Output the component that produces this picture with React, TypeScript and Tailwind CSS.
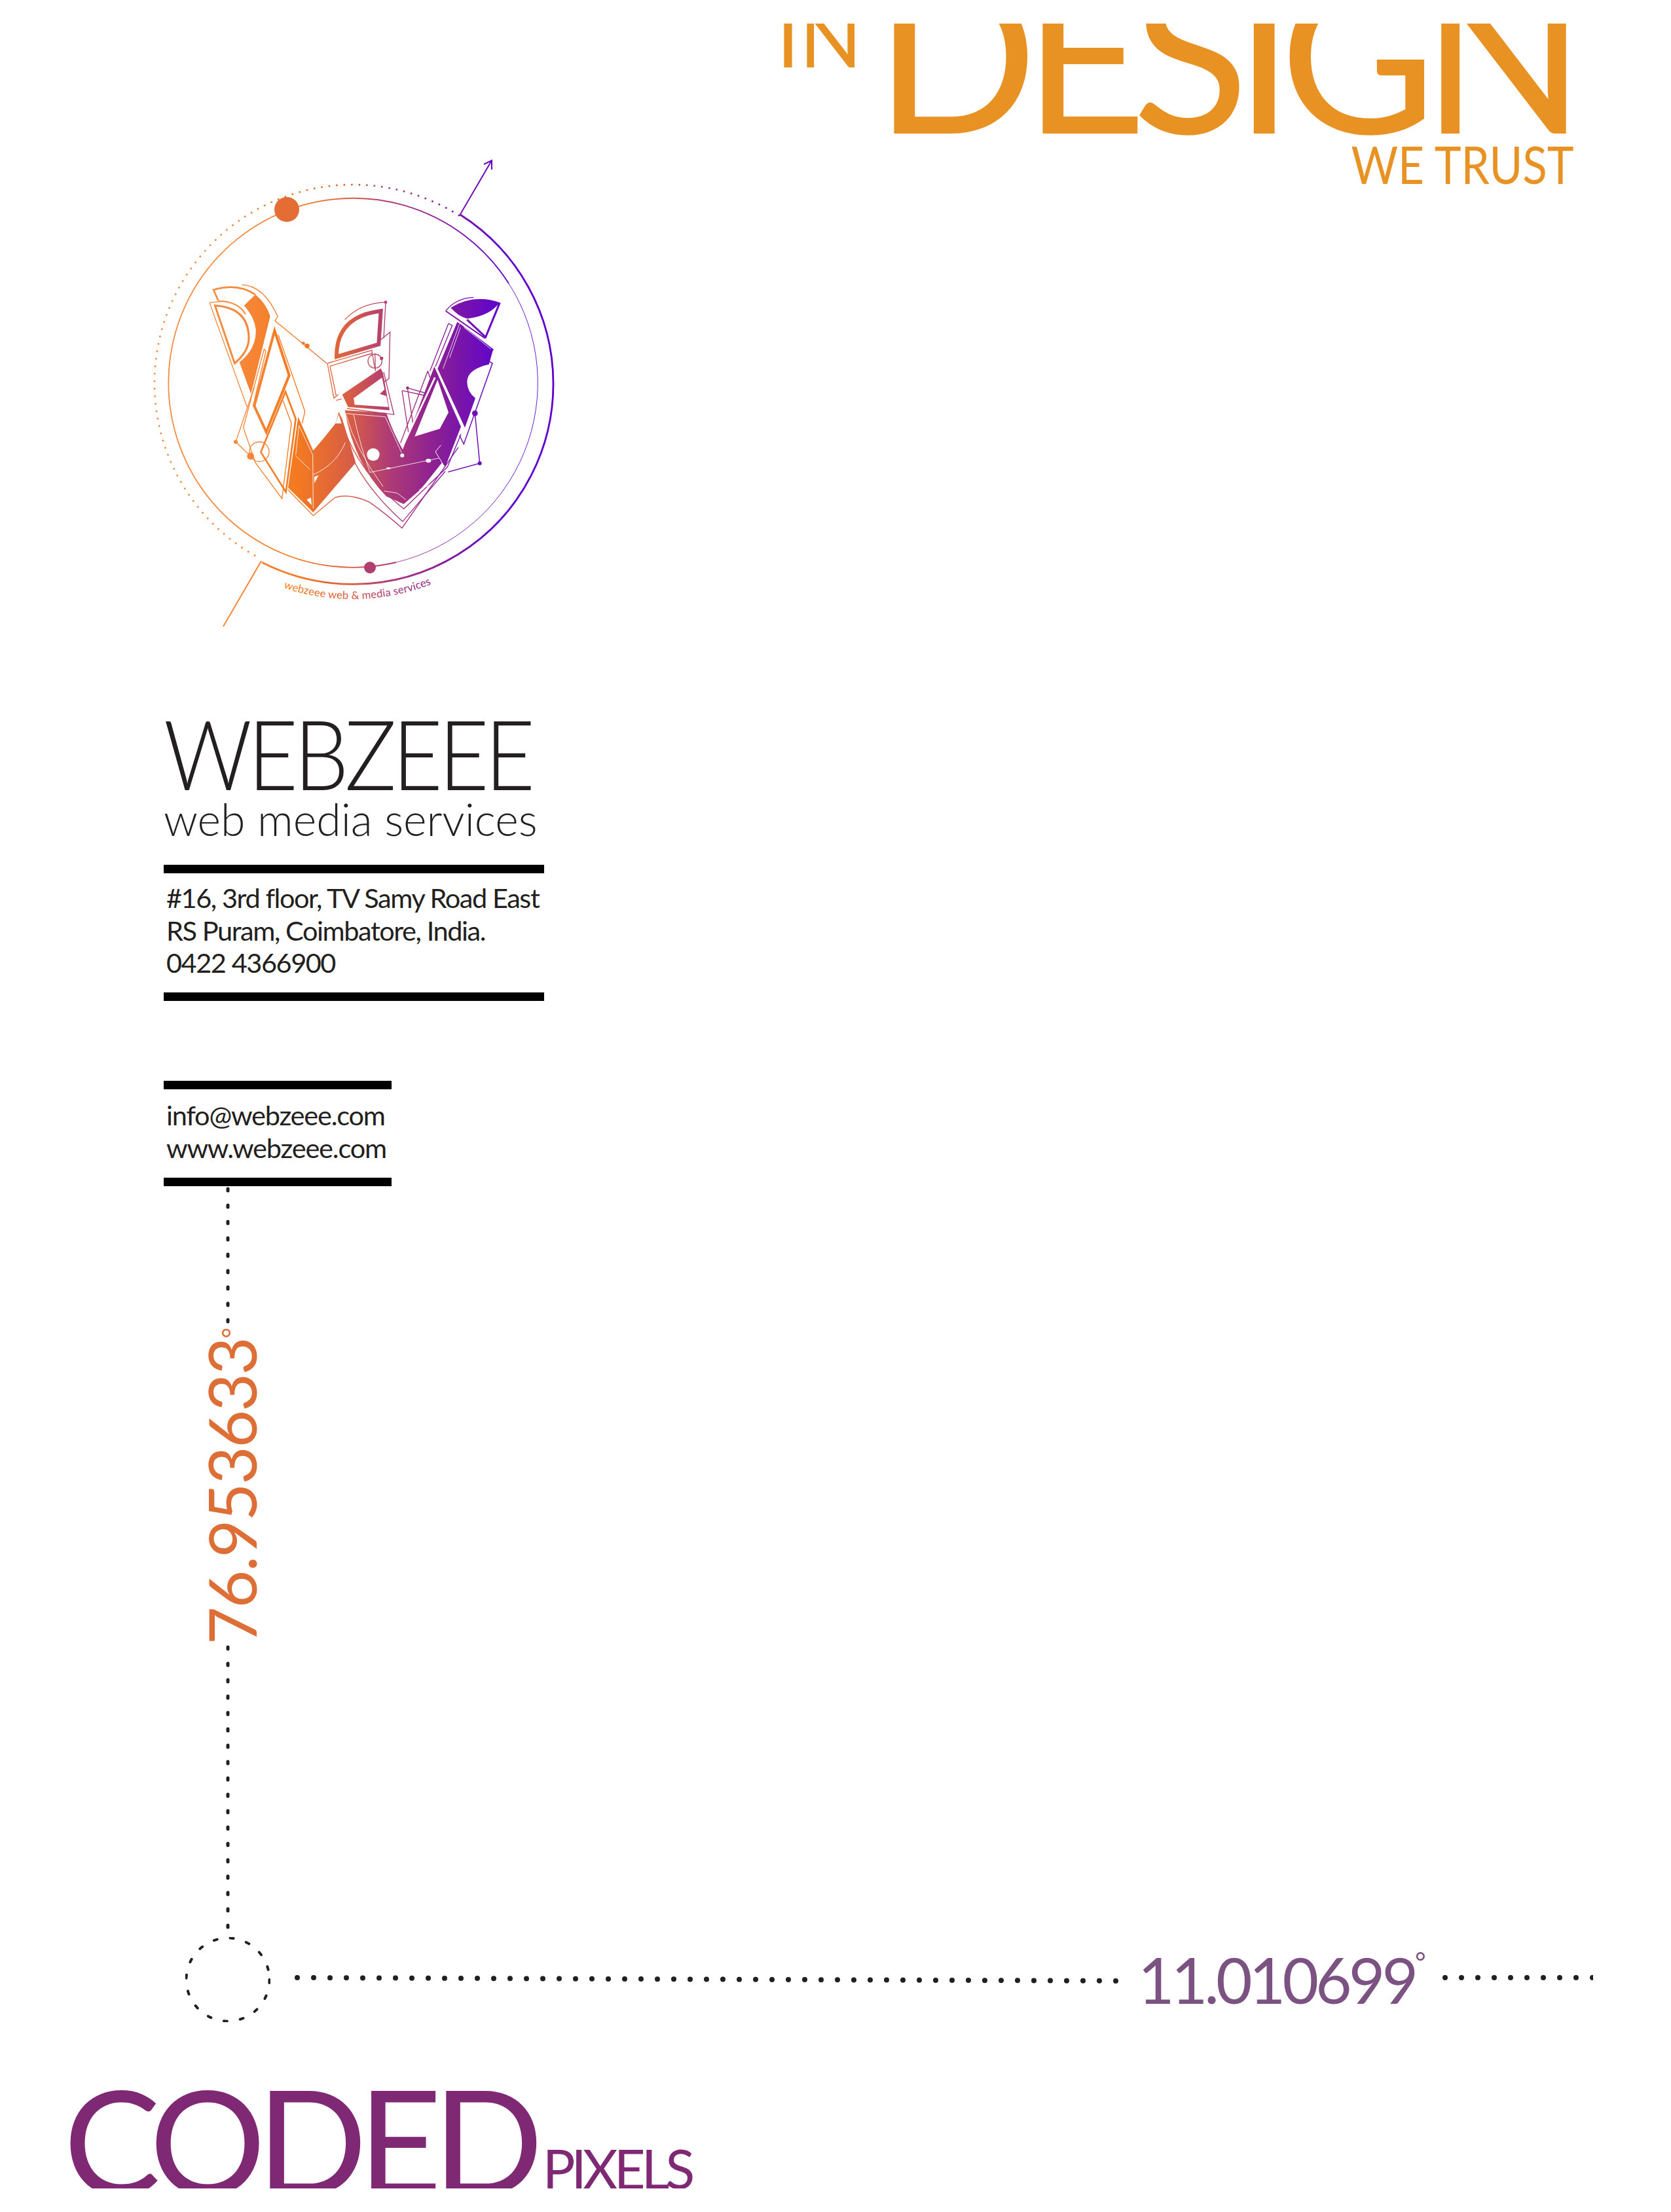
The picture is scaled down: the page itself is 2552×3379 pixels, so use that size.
const Stops = () => (
  <>
    <stop offset="0" stopColor="#f68c42" />
    <stop offset="0.25" stopColor="#f47a20" />
    <stop offset="0.43" stopColor="#d85e45" />
    <stop offset="0.56" stopColor="#b03c74" />
    <stop offset="0.73" stopColor="#8a1f95" />
    <stop offset="0.92" stopColor="#6206c8" />
    <stop offset="1" stopColor="#5e00cc" />
  </>
);

const Logo = () => (
  <svg width="640" height="740" viewBox="230 230 640 740" fill="none">
    <defs>
      <linearGradient id="ring" gradientUnits="userSpaceOnUse" x1="340" y1="0" x2="790" y2="0">
        <Stops />
      </linearGradient>
      <linearGradient id="mark" gradientUnits="userSpaceOnUse" x1="120" y1="0" x2="1470" y2="0">
        <Stops />
      </linearGradient>
    </defs>

    {/* rings */}
    <path d="M777 433A282 282 0 1 0 605 859" stroke="url(#ring)" strokeWidth="1.8" />
    <path d="M777 433A282 282 0 0 1 605 859" stroke="url(#ring)" strokeWidth="0.9" />
    <path d="M703 328A306 306 0 0 1 845 586A306 306 0 0 1 400 859" stroke="url(#ring)" strokeWidth="2.8" />
    <path
      d="M701 329A303 303 0 0 0 236 585A303 303 0 0 0 399 854"
      stroke="url(#ring)"
      strokeWidth="3"
      strokeLinecap="round"
      strokeDasharray="0 11.5"
    />
    <path d="M702 329L751 245M739 251L751 245L751 259" stroke="url(#ring)" strokeWidth="2" />
    <path d="M399 857L341 957" stroke="url(#ring)" strokeWidth="2" />
    <circle cx="438" cy="320" r="19" fill="#e46c35" />
    <circle cx="565" cy="867" r="9" fill="#b03f70" />
    <path id="caption" d="M433 898A330 330 0 0 0 772 818" />
    <text fill="url(#ring)" fontFamily="Lato, sans-serif" fontSize="16.5" letterSpacing="0.2">
      <textPath href="#caption">webzeee web &amp; media services</textPath>
    </text>

    {/* the W, in thirds of a pixel */}
    <g transform="translate(300 420) scale(0.33333)">
      <g stroke="url(#mark)" strokeWidth="4">
        <path d="M210 45Q310 50 372 190L360 210L597 405" />
        <path d="M60 127L130 120M60 127L232 605" />
        <path d="M375 275L497 625L485 680" />
        <path d="M396 575L435 680L392 1025L270 860L215 700L310 340L318 350L260 600" />
        <path d="M180 765L265 515M180 765L248 830" />
        <path d="M420 985L535 1103L635 1020Q700 1000 790 1040Q850 1080 942 1160L1200 790" />
        <path d="M652 630Q720 890 950 1072L1150 880L1212 730" />
        <path d="M725 860Q800 1000 945 1130L1140 900" />
        <path d="M680 205Q750 130 867 125L858 290M840 300L887 262L882 475L860 490" />
        <path d="M600 405L803 345L818 430M600 405L630 565L650 548M612 418L803 360M612 418L640 552M640 575L665 568" />
        <path d="M818 360L820 440" />
        <path d="M858 445L905 640L690 612" />
        <path d="M942 530L1045 552M967 518L1045 540M942 530L975 745M967 518L995 700M1060 440L935 770M1060 440L1070 470" />
        <path d="M1155 222L1172 232L1095 420M1155 222L1070 440" />
        <path d="M1340 395L1356 405L1225 775L1205 735" strokeWidth="4.5" />
        <path d="M1276 634L1298 863L1153 903" strokeWidth="4.5" />
        <path d="M1142 165Q1190 105 1270 103" />
        <circle cx="818" cy="395" r="32" />
      </g>
      <g stroke="url(#mark)">
        <path d="M100 117L78 68Q190 35 270 90" strokeWidth="8" />
        <path d="M85 140Q240 150 240 290Q240 350 175 405Z" strokeWidth="9" />
        <path d="M100 120Q190 120 225 180" strokeWidth="6" />
        <path d="M358 255L425 460L320 720L265 600Z" strokeWidth="12" />
        <path d="M408 535L295 812L410 995L455 660Z" strokeWidth="8" />
        <circle cx="288" cy="810" r="45" strokeWidth="4" />
        <path d="M642 375Q640 190 845 165L835 318Z" strokeWidth="18" />
        <path d="M1390 127L1325 285L1240 205" strokeWidth="9" />
        <path d="M1142 165L1322 290" strokeWidth="6" />
        <path d="M1360 345L1205 225" strokeWidth="5" />
      </g>
      <g fill="url(#mark)">
        <path d="M218 140L270 90Q320 130 338 190L250 545L197 400Q275 340 272 250Q265 190 218 140Z" />
        <path d="M466 650L535 805Q600 730 637 680L652 630L668 660L730 860L535 1088L420 975Z" />
        <path d="M680 620L870 632Q900 720 945 800L1090 420L1212 695L1140 880L1125 860L1030 980L950 1050L870 1015Q720 860 680 620Z" />
        <path d="M668 548L845 428L855 450L885 620L695 605Z" />
        <path d="M1195 215L1360 340L1340 410L1320 415Q1240 440 1240 490Q1240 535 1278 565L1230 700L1105 430Z" />
        <path d="M1165 150Q1270 85 1390 127Q1340 190 1240 200Q1200 190 1165 150Z" />
        <circle cx="490" cy="313" r="7" />
        <circle cx="507" cy="325" r="11" />
        <circle cx="180" cy="765" r="9" />
        <circle cx="248" cy="830" r="16" />
        <circle cx="867" cy="125" r="7" />
        <circle cx="848" cy="382" r="8" />
        <circle cx="967" cy="518" r="7" />
        <circle cx="1276" cy="634" r="13" />
        <circle cx="1298" cy="863" r="9" />
      </g>
      <g fill="#fff">
        <path d="M652 640L637 680L665 680Z" />
        <path d="M540 925L560 918L540 955Z" />
        <path d="M505 1030L525 1020L528 1055Z" />
        <path d="M720 565L850 470L862 525L840 545L870 555L880 605L725 595Z" />
        <path d="M1105 480L1155 630L1115 705L1000 740Z" />
        <circle cx="810" cy="823" r="29" />
        <circle cx="943" cy="827" r="9" />
        <ellipse cx="880" cy="886" rx="10" ry="4" />
        <ellipse cx="1063" cy="851" rx="12" ry="9" />
      </g>
      <g stroke="#fff" strokeWidth="2.5">
        <path d="M455 825L470 690L533 825L535 1070M455 830L520 892M535 915Q640 870 682 768" />
        <path d="M945 785L1093 470" strokeWidth="8" />
        <path d="M680 635L865 650L940 815M720 640Q750 780 795 905M685 640Q730 800 855 970" />
        <path d="M795 905L1110 840M860 990L920 1000L960 1030M1020 985L1075 960" />
        <path d="M1120 780L1095 810L1130 868L1025 985" strokeWidth="3" />
        <path d="M1130 430L1205 225M1225 240L1350 340M1160 380L1210 240" />
        <path d="M1320 422Q1255 445 1250 490Q1250 530 1272 555" strokeWidth="3" />
      </g>
    </g>
  </svg>
);

const VerticalDots = ({ height }: { height: number }) => (
  <svg width="6" height={height} className="block">
    <line x1="3" y1="4" x2="3" y2={height} stroke="#231f20" strokeWidth="5" strokeLinecap="round" strokeDasharray="3 22" />
  </svg>
);

const HorizontalDots = ({ width, drop }: { width: number; drop: number }) => (
  <svg width={width} height="14" className="block">
    <line x1="4" y1="4" x2={width} y2={4 + drop} stroke="#231f20" strokeWidth="8" strokeLinecap="round" strokeDasharray="0 25" />
  </svg>
);

const Rule = ({ className }: { className: string }) => <div className={`h-[13px] bg-black ${className}`} />;

export default function App() {
  return (
    <div className="h-[3379px] w-[2552px] bg-white py-[36px] font-['Lato',sans-serif]">
      <div className="h-full overflow-hidden">
        <div className="flex h-[168px] items-start pl-[1186px]">
          <span className="-mt-[43px] text-[125px] leading-none text-[#e99224]">IN</span>
          <span className="-mt-[123px] ml-[19px] text-[328px] leading-none tracking-[-22.5px] text-[#e99224]">DESIGN</span>
        </div>

        <div className="flex justify-between pl-[230px] pr-[148px]">
          <div className="mt-[26px] flex w-[640px] flex-col">
            <Logo />
            <div className="ml-[20px] flex flex-col font-light text-[#231f20]">
              <div className="mt-[115px] origin-left scale-x-[0.895] whitespace-nowrap text-[148px] leading-[130px] tracking-[-7px]">WEBZEEE</div>
              <div className="mt-[1px] text-[68px] leading-[70px]">web media services</div>
              <Rule className="mt-[35px] w-[581px]" />
              <div className="mt-[13px] whitespace-nowrap pl-[4px] text-[41.5px] font-normal leading-[49.5px] tracking-[-1.45px]">
                <div>#16, 3rd floor, TV Samy Road East</div>
                <div>RS Puram, Coimbatore, India.</div>
                <div>0422 4366900</div>
              </div>
              <Rule className="mt-[20px] w-[581px]" />
              <Rule className="mt-[122px] w-[348px]" />
              <div className="mt-[14px] whitespace-nowrap pl-[4px] text-[41.5px] font-normal leading-[50px] tracking-[-1.2px]">
                <div>info@webzeee.com</div>
                <div>www.webzeee.com</div>
              </div>
              <Rule className="mt-[21px] w-[348px]" />
              <div className="ml-[95px] flex w-[6px] flex-col items-center">
                <VerticalDots height={218} />
                <div className="my-[3px] ml-[12px] rotate-180 whitespace-nowrap text-[100px] font-normal leading-[100px] tracking-[-2.2px] text-[#dd6e35] [writing-mode:vertical-rl]">
                  76.953633<span className="text-[40px] leading-none">°</span>
                </div>
                <VerticalDots height={447} />
              </div>
            </div>
          </div>
          <div className="mt-[6px] h-[80px] origin-right scale-x-[0.864] text-[80px] font-normal leading-[80px] text-[#e99224]">WE TRUST</div>
        </div>

        <div className="flex items-center pl-[283px]">
          <svg width="130" height="130" fill="none">
            <circle cx="65" cy="65" r="63.5" stroke="#231f20" strokeWidth="4" strokeLinecap="round" strokeDasharray="5 20.2" />
          </svg>
          <div className="ml-[37px]">
            <HorizontalDots width={1262} drop={5} />
          </div>
          <div className="ml-[26px] whitespace-nowrap text-[96px] leading-none tracking-[-5px] text-[#7c5283]">
            11.010699<span className="align-top text-[40px] leading-none">°</span>
          </div>
          <div className="ml-[30px]">
            <HorizontalDots width={230} drop={0} />
          </div>
        </div>

        <div className="mt-[67px] flex items-start pl-[97px] text-[#7f2975]">
          <span className="text-[222px] leading-[222px] tracking-[-14px]">CODED</span>
          <span className="ml-[13px] mt-[115px] text-[83px] leading-[83px] tracking-[-6px]">PIXELS</span>
        </div>
      </div>
    </div>
  );
}
